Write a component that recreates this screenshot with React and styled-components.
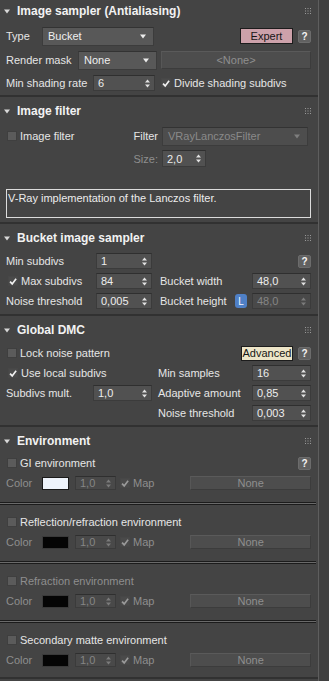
import React from 'react';
import styled, { createGlobalStyle } from 'styled-components';

const Global = createGlobalStyle`
  html, body { margin: 0; padding: 0; background: #444444; }
  body {
    font-family: "Liberation Sans", Arial, sans-serif;
    font-size: 11px;
    color: #e4e4e4;
  }
`;

const Screen = styled.div`
  display: flex;
  width: 329px;
  height: 681px;
  overflow: hidden;
  background: #444444;
`;

const Panel = styled.div`
  width: 318px;
  flex: none;
  border-right: 1px solid #5e5e5e;
  display: flex;
  flex-direction: column;
`;

const Strip = styled.div`
  flex: 1;
  background: #404040;
`;

const Rollout = styled.section`
  border-bottom: 2px solid #313131;
  margin-bottom: ${p => (p.$last ? 0 : 3)}px;
`;

const HeaderBar = styled.div`
  height: 22px;
  display: flex;
  align-items: center;
  padding: 0 7px 0 4px;
  font-weight: bold;
  font-size: 12px;
  color: #f2f2f2;
`;

const Title = styled.span`
  flex: 1;
  margin-left: 7px;
  white-space: nowrap;
`;

const Body = styled.div`
  display: flex;
  flex-direction: column;
  gap: ${p => (p.$gap ?? 4)}px;
  padding: ${p => p.$pad || '4px 7px 4px 6px'};
`;

const Row = styled.div`
  display: flex;
  align-items: center;
  height: ${p => p.$h || 16}px;
  gap: ${p => p.$gap || 0}px;
`;

const Label = styled.span`
  flex: none;
  width: ${p => (p.$w ? `${p.$w}px` : 'auto')};
  white-space: nowrap;
  text-align: ${p => (p.$right ? 'right' : 'left')};
  padding-right: ${p => (p.$right ? 4 : 0)}px;
  box-sizing: border-box;
  color: ${p => (p.$dim ? '#8e8e8e' : '#e6e6e6')};
`;

const Cell = styled.div`
  flex: none;
  width: ${p => p.$w}px;
  display: flex;
  align-items: center;
`;

const Spacer = styled.div`
  flex: 1;
`;

const Gap = styled.div`
  flex: none;
  width: ${p => p.$w}px;
`;

const VGap = styled.div`
  flex: none;
  height: ${p => p.$h}px;
`;

const SpinBox = styled.div`
  flex: none;
  box-sizing: border-box;
  width: ${p => p.$w}px;
  height: ${p => p.$h || 16}px;
  display: flex;
  align-items: center;
  justify-content: space-between;
  padding: 0 4px 0 4px;
  background: ${p => (p.$disabled ? '#494949' : '#515151')};
  border: 1px solid #3b3b3b;
  border-top-color: #2f2f2f;
  color: ${p => (p.$disabled ? '#858585' : '#ededed')};
`;

const DropBox = styled.div`
  flex: none;
  box-sizing: border-box;
  width: ${p => p.$w}px;
  height: ${p => p.$h || 19}px;
  display: flex;
  align-items: center;
  justify-content: space-between;
  padding: 0 7px 0 5px;
  background: ${p => (p.$disabled ? '#4d4d4d' : '#585858')};
  border: 1px solid #3c3c3c;
  border-top-color: #333;
  color: ${p => (p.$disabled ? '#8a8a8a' : '#efefef')};
`;

const FlatButton = styled.div`
  flex: ${p => (p.$w ? 'none' : 1)};
  width: ${p => (p.$w ? `${p.$w}px` : 'auto')};
  box-sizing: border-box;
  height: ${p => p.$h || 15}px;
  display: flex;
  align-items: center;
  justify-content: center;
  background: #4d4d4d;
  border: 1px solid #3c3c3c;
  border-top-color: #5a5a5a;
  border-left-color: #575757;
  color: #8f8f8f;
`;

const ToneButton = styled.div`
  flex: none;
  box-sizing: border-box;
  width: ${p => p.$w}px;
  height: ${p => p.$h || 16}px;
  display: flex;
  align-items: center;
  justify-content: center;
  background: ${p => p.$bg};
  border: 1px solid #1c1c1c;
  color: #161616;
`;

const Help = styled.div`
  flex: none;
  box-sizing: border-box;
  width: 13px;
  height: 13px;
  margin-left: ${p => p.$ml || 0}px;
  display: flex;
  align-items: center;
  justify-content: center;
  background: #616161;
  border: 1px solid #6c6c6c;
  border-radius: 2px;
  color: #f4f4f4;
  font-weight: bold;
  font-size: 10px;
`;

const LockButton = styled.div`
  flex: none;
  box-sizing: border-box;
  width: 12px;
  height: 14px;
  display: flex;
  align-items: center;
  justify-content: center;
  background: #4f80c6;
  border-radius: 3px;
  color: #f6f8ff;
  font-size: 10px;
`;

const CheckWrap = styled.label`
  display: flex;
  align-items: center;
  gap: 3px;
  margin-left: ${p => p.$ml ?? 1}px;
  white-space: nowrap;
  color: ${p => (p.$dim ? '#8e8e8e' : '#e6e6e6')};
`;

const Box = styled.span`
  flex: none;
  box-sizing: border-box;
  width: 10px;
  height: 10px;
  display: flex;
  align-items: center;
  justify-content: center;
  background: ${p => (p.$on ? '#4a4a4a' : '#5b5b5b')};
  border: 1px solid ${p => (p.$on ? '#474747' : '#3f3f3f')};
`;

const Swatch = styled.div`
  flex: none;
  box-sizing: border-box;
  width: 27px;
  height: 13px;
  background: ${p => p.$c};
  border: 1px solid ${p => (p.$light ? '#1a1a1a' : '#3a3a3a')};
`;

const InfoBox = styled.div`
  box-sizing: border-box;
  height: 29px;
  border: 1px solid #dcdcdc;
  padding: 1px 1px;
  line-height: 14px;
  color: #ececec;
  white-space: nowrap;
  overflow: hidden;
`;

const DoubleRule = styled.div`
  box-sizing: border-box;
  height: 3px;
  margin: 0 -5px 0 -6px;
  background: #6a6a6a;
  border-top: 1px solid #1b1b1b;
  border-bottom: 1px solid #1b1b1b;
`;

const EnvGroup = styled.div`
  display: flex;
  flex-direction: column;
  gap: 5px;
  padding: ${p => p.$top}px 0 ${p => p.$bottom}px;
`;

const Triangle = () => (
  <svg width="6" height="5" viewBox="0 0 6 5">
    <polygon points="0,0.5 6,0.5 3,4.5" fill="#d8d8d8" />
  </svg>
);

const Grip = () => (
  <svg width="6" height="6" viewBox="0 0 6 6">
    {[0, 2.5, 5].map(x =>
      [0, 2.5, 5].map(y => <rect key={`${x}-${y}`} x={x} y={y} width="1" height="1" fill="#9a9a9a" />)
    )}
  </svg>
);

const SpinArrows = ({ dim }) => (
  <svg width="5" height="9" viewBox="0 0 5 9">
    <polygon points="0,3.6 2.5,0.4 5,3.6" fill={dim ? '#7c7c7c' : '#e2e2e2'} />
    <polygon points="0,5.4 5,5.4 2.5,8.6" fill={dim ? '#7c7c7c' : '#e2e2e2'} />
  </svg>
);

const DownArrow = ({ dim }) => (
  <svg width="6" height="5" viewBox="0 0 6 5">
    <polygon points="0,0.5 6,0.5 3,4.5" fill={dim ? '#7e7e7e' : '#ececec'} />
  </svg>
);

const Tick = ({ dim }) => (
  <svg width="9" height="9" viewBox="0 0 9 9">
    <path d="M1.2 4.6 L3.6 7.2 L8 1.4" fill="none" stroke={dim ? '#9a9a9a' : '#f0f0f0'} strokeWidth="1.9" />
  </svg>
);

const Header = ({ title }) => (
  <HeaderBar>
    <Triangle />
    <Title>{title}</Title>
    <Grip />
  </HeaderBar>
);

const Spinner = ({ w, h, value, disabled }) => (
  <SpinBox $w={w} $h={h} $disabled={disabled}>
    <span>{value}</span>
    <SpinArrows dim={disabled} />
  </SpinBox>
);

const Dropdown = ({ w, h, value, disabled }) => (
  <DropBox $w={w} $h={h} $disabled={disabled}>
    <span>{value}</span>
    <DownArrow dim={disabled} />
  </DropBox>
);

const Check = ({ on, dim, ml, children }) => (
  <CheckWrap $dim={dim} $ml={ml}>
    <Box $on={on}>{on && <Tick dim={dim} />}</Box>
    {children}
  </CheckWrap>
);

const ColorRow = ({ color, light }) => (
  <Row $h={14}>
    <Label $w={36} $dim>Color</Label>
    <Swatch $c={color} $light={light} />
    <Gap $w={6} />
    <Spinner w={41} h={14} value="1,0" disabled />
    <Gap $w={4} />
    <Check on dim ml={0}>Map</Check>
    <Gap $w={36} />
    <FlatButton $h={14}>None</FlatButton>
  </Row>
);

export default function App() {
  return (
    <>
      <Global />
      <Screen>
        <Panel>
          <Rollout>
            <Header title="Image sampler (Antialiasing)" />
            <Body $pad="4px 7px 3px 6px">
              <Row $h={20}>
                <Label $w={36}>Type</Label>
                <Dropdown w={112} value="Bucket" />
                <Spacer />
                <ToneButton $w={53} $bg="#cda1aa">Expert</ToneButton>
                <Help $ml={5}>?</Help>
              </Row>
              <Row $h={20}>
                <Label $w={72}>Render mask</Label>
                <Dropdown w={79} value="None" />
                <Gap $w={4} />
                <FlatButton $h={18}>&lt;None&gt;</FlatButton>
              </Row>
              <Row $h={18}>
                <Label $w={87}>Min shading rate</Label>
                <Spinner w={62} value="6" />
                <Gap $w={6} />
                <Check on ml={0}>Divide shading subdivs</Check>
              </Row>
            </Body>
          </Rollout>

          <Rollout>
            <Header title="Image filter" />
            <Body $pad="4px 7px 4px 6px">
              <Row $h={20}>
                <Cell $w={120}>
                  <Check>Image filter</Check>
                </Cell>
                <Label $w={36} $right>Filter</Label>
                <Dropdown w={146} value="VRayLanczosFilter" disabled />
              </Row>
              <Row $h={17}>
                <Gap $w={120} />
                <Label $w={36} $right $dim>Size:</Label>
                <Spinner w={44} h={17} value="2,0" />
              </Row>
              <VGap $h={14} />
              <InfoBox>V-Ray implementation of the Lanczos filter.</InfoBox>
            </Body>
          </Rollout>

          <Rollout>
            <Header title="Bucket image sampler" />
            <Body $pad="4px 7px 5px 6px">
              <Row>
                <Label $w={90}>Min subdivs</Label>
                <Spinner w={56} value="1" />
                <Spacer />
                <Help>?</Help>
              </Row>
              <Row>
                <Cell $w={90}>
                  <Check on ml={2}>Max subdivs</Check>
                </Cell>
                <Spinner w={56} value="84" />
                <Gap $w={8} />
                <Label $w={92}>Bucket width</Label>
                <Spinner w={59} value="48,0" />
              </Row>
              <Row>
                <Label $w={90}>Noise threshold</Label>
                <Spinner w={56} value="0,005" />
                <Gap $w={8} />
                <Label $w={75}>Bucket height</Label>
                <LockButton>L</LockButton>
                <Gap $w={5} />
                <Spinner w={59} value="48,0" disabled />
              </Row>
            </Body>
          </Rollout>

          <Rollout>
            <Header title="Global DMC" />
            <Body $pad="4px 7px 4px 6px">
              <Row>
                <Check>Lock noise pattern</Check>
                <Spacer />
                <ToneButton $w={52} $h={15} $bg="#ede5c8">Advanced</ToneButton>
                <Help $ml={5}>?</Help>
              </Row>
              <Row>
                <Cell $w={152}>
                  <Check on ml={2}>Use local subdivs</Check>
                </Cell>
                <Label $w={94}>Min samples</Label>
                <Spinner w={59} value="16" />
              </Row>
              <Row>
                <Label $w={87}>Subdivs mult.</Label>
                <Spinner w={59} value="1,0" />
                <Gap $w={6} />
                <Label $w={94}>Adaptive amount</Label>
                <Spinner w={59} value="0,85" />
              </Row>
              <Row>
                <Gap $w={152} />
                <Label $w={94}>Noise threshold</Label>
                <Spinner w={59} value="0,003" />
              </Row>
            </Body>
          </Rollout>

          <Rollout $last>
            <Header title="Environment" />
            <Body $gap={0} $pad="0 7px 0 6px">
              <EnvGroup $top={3} $bottom={12}>
                <Row>
                  <Check>GI environment</Check>
                  <Spacer />
                  <Help>?</Help>
                </Row>
                <ColorRow color="#eef3fb" light />
              </EnvGroup>
              <DoubleRule />
              <EnvGroup $top={9} $bottom={12}>
                <Row>
                  <Check>Reflection/refraction environment</Check>
                </Row>
                <ColorRow color="#050505" />
              </EnvGroup>
              <DoubleRule />
              <EnvGroup $top={9} $bottom={12}>
                <Row>
                  <Check dim>Refraction environment</Check>
                </Row>
                <ColorRow color="#050505" />
              </EnvGroup>
              <DoubleRule />
              <EnvGroup $top={9} $bottom={10}>
                <Row>
                  <Check>Secondary matte environment</Check>
                </Row>
                <ColorRow color="#050505" />
              </EnvGroup>
            </Body>
          </Rollout>
        </Panel>
        <Strip />
      </Screen>
    </>
  );
}
